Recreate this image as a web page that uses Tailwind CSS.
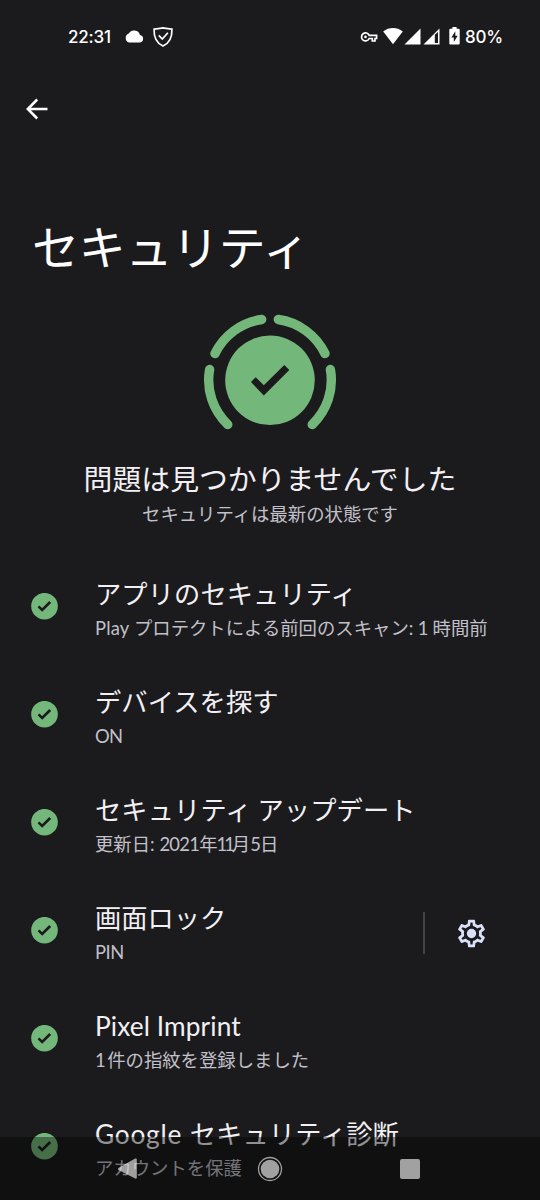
<!DOCTYPE html>
<html lang="ja">
<head>
<meta charset="utf-8">
<title>セキュリティ</title>
<script src="https://cdn.jsdelivr.net/npm/@tailwindcss/browser@4"></script>
</head>
<body class="bg-[#1b1b1d] font-['Noto_Sans_CJK_JP',sans-serif] text-[#f2f0f4]">
<svg class="hidden">
  <symbol id="ok" viewBox="0 0 27 27"><circle cx="13.5" cy="13.2" r="13.3" fill="#73b77b"/><path d="M7.5 13.3l3.7 3.7 8-8" fill="none" stroke="#1b1b1d" stroke-width="2.6"/></symbol>
</svg>
<div class="relative flex h-[1200px] w-[540px] flex-col overflow-hidden">
  <header class="flex h-[72px] items-center pl-[68px] pr-[37px] text-white">
    <span class="w-[44px] whitespace-nowrap pt-[2px] font-['Inter',sans-serif] text-[17px] font-medium leading-none tracking-[-0.2px]">22:31</span>
    <svg class="ml-[12px] h-[13px] w-[20px]" viewBox="0 0 18 12"><path fill="#fff" d="M14.5 4.6A5.6 5.6 0 0 0 4.2 3.3 4.3 4.3 0 0 0 4.5 11.5H14.5A3.5 3.5 0 0 0 14.5 4.6Z"/></svg>
    <svg class="ml-[8px] mt-px h-[22px] w-[22px]" viewBox="0 0 22 22" fill="none" stroke="#fff" stroke-width="1.7"><path d="M11 1.9C8 2.3 5 2.8 2.1 3.1 1.7 11 4 16.8 11 20 18 16.8 20.3 11 19.9 3.1 17 2.8 14 2.3 11 1.9Z"/><path d="M6.8 9.3l3.5 3.8 5.6-6.3"/></svg>
    <div class="ml-auto flex items-center">
      <svg class="mt-[2px] h-[12px] w-[18px]" viewBox="0 0 18 12" fill="none" stroke="#fff" stroke-width="1.7"><path d="M9.2 4.3H16.6V7.5H15V10H12.3V7.5H9.2A4 4 0 1 1 9.2 4.3Z"/><circle cx="5.5" cy="5.9" r="1.3" fill="#fff" stroke="none"/></svg>
      <svg class="ml-[5px] h-[18px] w-[20px]" viewBox="0 0 20 18" fill="#fff"><path d="M.2 4.5C6-.1 14-.1 19.8 4.5L10 17.2Z"/></svg>
      <svg class="ml-[1px] h-[17px] w-[17px]" viewBox="0 0 17 17" fill="#fff"><path d="M16.5.5V16.5H.5Z"/></svg>
      <svg class="ml-[2px] h-[17px] w-[17px]" viewBox="0 0 17 17" fill="#fff" fill-rule="evenodd"><path d="M16.5.5V16.5H.5ZM11.8 6.8V15H15V4Z"/></svg>
      <svg class="ml-[9px] h-[18px] w-[11px]" viewBox="0 0 11 18"><path fill="#fff" d="M3.4 0H7.6V1.8H9.6Q10.7 1.8 10.7 3V16.4Q10.7 17.5 9.6 17.5H1.4Q.3 17.5 .3 16.4V3Q.3 1.8 1.4 1.8H3.4Z"/><path fill="#1b1b1d" d="M6.3 4.3V8.7H8.7L4.8 15V10.6H2.4Z"/></svg>
      <span class="ml-[5px] w-[38px] whitespace-nowrap pt-[2px] font-['Inter',sans-serif] text-[17px] font-medium leading-none tracking-[-0.2px]">80%</span>
    </div>
  </header>

  <div class="flex h-[74px] items-center pl-[26px]">
    <svg class="h-[22px] w-[22px]" viewBox="0 0 22 22" fill="none" stroke="#fff" stroke-width="2.5"><path d="M21.5 11H2.4M11.2 1.5L1.8 11l9.4 9.5"/></svg>
  </div>

  <h1 class="mt-[64px] h-[74px] pl-[32px] text-[47px] leading-[70px] tracking-[-0.3px] text-white">セキュリティ</h1>

  <section class="flex h-[268px] flex-col items-center pt-[30px]">
    <svg class="h-[118px] w-[134px]" viewBox="203 314 134 118">
      <g fill="none" stroke="#73b77b" stroke-width="9.4" stroke-linecap="round">
        <path d="M278.3 319.5A61.3 61.3 0 0 1 325 353.6"/>
        <path d="M330.4 369.5A61.3 61.3 0 0 1 312.2 424.6"/>
        <path d="M261.7 319.5A61.3 61.3 0 0 0 215 353.6"/>
        <path d="M209.6 369.5A61.3 61.3 0 0 0 227.8 424.6"/>
      </g>
      <circle cx="270" cy="380.3" r="44.8" fill="#73b77b"/>
      <path fill="#1b1b1d" d="M251 382L255.7 377.3 263.8 385.3 284.3 365 289.3 370 263.8 395.5Z"/>
    </svg>
    <h2 class="mt-[25px] h-[43px] whitespace-nowrap text-[28.875px] leading-[42px]">問題は見つかりませんでした</h2>
    <p class="h-[27px] whitespace-nowrap text-[18.375px] leading-[27px] text-[#c2c0ca]">セキュリティは最新の状態です</p>
  </section>

  <main class="flex flex-col whitespace-nowrap">
    <div class="flex h-[108px] items-center pl-[31px]">
      <svg class="h-[27px] w-[27px]"><use href="#ok"/></svg>
      <div class="ml-[37px] flex flex-col pt-[3px]">
        <div class="h-[38px] text-[26.25px] leading-[36px] tracking-[0.1px]">アプリのセキュリティ</div>
        <div class="h-[28px] text-[18.375px] leading-[29px] text-[#c2c0ca]"><span class="font-['Lato'] leading-none tracking-[0.2px]">Play </span>プロテクトによる前回のスキャン<span class="font-['Lato'] leading-none tracking-[-0.2px]">: 1 </span>時間前</div>
      </div>
    </div>
    <div class="flex h-[108px] items-center pl-[31px]">
      <svg class="h-[27px] w-[27px]"><use href="#ok"/></svg>
      <div class="ml-[37px] flex flex-col pt-[3px]">
        <div class="h-[38px] text-[26.25px] leading-[36px] tracking-[0.1px]">デバイスを探す</div>
        <div class="h-[28px] text-[18.375px] leading-[29px] text-[#c2c0ca]"><span class="font-['Lato'] leading-none tracking-[-0.8px]">ON</span></div>
      </div>
    </div>
    <div class="flex h-[108px] items-center pl-[31px]">
      <svg class="h-[27px] w-[27px]"><use href="#ok"/></svg>
      <div class="ml-[37px] flex flex-col pt-[3px]">
        <div class="h-[38px] text-[26.25px] leading-[36px] tracking-[0.1px]">セキュリティ アップデート</div>
        <div class="h-[28px] text-[18.375px] leading-[29px] text-[#c2c0ca]">更新日<span class="font-['Lato'] leading-none">: </span><span class="font-['Lato'] leading-none tracking-[-0.7px]">2021</span>年<span class="-ml-px font-['Lato'] leading-none tracking-[-3px]">11</span>月<span class="font-['Lato'] leading-none tracking-[-0.9px]">5</span>日</div>
      </div>
    </div>
    <div class="flex h-[108px] items-center pl-[31px]">
      <svg class="h-[27px] w-[27px]"><use href="#ok"/></svg>
      <div class="ml-[37px] flex flex-col pt-[3px]">
        <div class="h-[38px] text-[26.25px] leading-[36px]">画面ロック</div>
        <div class="h-[28px] text-[18.375px] leading-[29px] text-[#c2c0ca]"><span class="font-['Lato'] leading-none tracking-[-0.5px]">PIN</span></div>
      </div>
      <div class="ml-auto mt-[6px] flex items-center pr-[52px]">
        <div class="h-[42px] w-[2px] bg-[#434346]"></div>
        <svg class="ml-[30px] h-[33px] w-[33px]" viewBox="0 0 24 24" fill="#dce1fb"><path d="M19.43 12.98c.04-.32.07-.64.07-.98 0-.34-.03-.66-.07-.98l2.11-1.65c.19-.15.24-.42.12-.64l-2-3.46c-.09-.16-.26-.25-.44-.25-.06 0-.12.01-.17.03l-2.49 1c-.52-.4-1.08-.73-1.69-.98l-.38-2.65C14.46 2.18 14.25 2 14 2h-4c-.25 0-.46.18-.49.42l-.38 2.65c-.61.25-1.17.59-1.69.98l-2.49-1c-.06-.02-.12-.03-.18-.03-.17 0-.34.09-.43.25l-2 3.46c-.13.22-.07.49.12.64l2.11 1.65c-.04.32-.07.65-.07.98 0 .33.03.66.07.98l-2.11 1.65c-.19.15-.24.42-.12.64l2 3.46c.09.16.26.25.44.25.06 0 .12-.01.17-.03l2.49-1c.52.4 1.08.73 1.69.98l.38 2.65c.03.24.24.42.49.42h4c.25 0 .46-.18.49-.42l.38-2.65c.61-.25 1.17-.59 1.69-.98l2.49 1c.06.02.12.03.18.03.17 0 .34-.09.43-.25l2-3.46c.12-.22.07-.49-.12-.64l-2.11-1.65zm-1.98-1.71c.04.31.05.52.05.73 0 .21-.02.43-.05.73l-.14 1.13.89.7 1.08.84-.7 1.21-1.27-.51-1.04-.42-.9.68c-.43.32-.84.56-1.25.73l-1.06.43-.16 1.13-.2 1.35h-1.4l-.19-1.35-.16-1.13-1.06-.43c-.43-.18-.83-.41-1.23-.71l-.91-.7-1.06.43-1.27.51-.7-1.21 1.08-.84.89-.7-.14-1.13c-.03-.31-.05-.54-.05-.74s.02-.43.05-.73l.14-1.13-.89-.7-1.08-.84.7-1.21 1.27.51 1.04.42.9-.68c.43-.32.84-.56 1.25-.73l1.06-.43.16-1.13.2-1.35h1.39l.19 1.35.16 1.13 1.06.43c.43.18.83.41 1.23.71l.91.7 1.06-.43 1.27-.51.7 1.21-1.07.85-.89.7.14 1.13z"/><circle cx="12" cy="12" r="3.4"/></svg>
      </div>
    </div>
    <div class="flex h-[108px] items-center pl-[31px]">
      <svg class="h-[27px] w-[27px]"><use href="#ok"/></svg>
      <div class="ml-[37px] flex flex-col pt-[3px]">
        <div class="h-[38px] text-[26.25px] leading-[37px]"><span class="font-['Lato'] leading-none tracking-[0.1px]">Pixel Imprint</span></div>
        <div class="h-[28px] text-[18.375px] leading-[29px] text-[#c2c0ca]"><span class="font-['Lato'] leading-none tracking-[-1.6px]">1 </span>件の指紋を登録しました</div>
      </div>
    </div>
    <div class="flex h-[108px] items-center pl-[31px]">
      <svg class="h-[27px] w-[27px]"><use href="#ok"/></svg>
      <div class="ml-[37px] flex flex-col pt-[3px]">
        <div class="h-[38px] text-[26.25px] leading-[36px] tracking-[0.1px]"><span class="font-['Lato'] leading-none tracking-[0.8px]">Google </span>セキュリティ診断</div>
        <div class="h-[28px] text-[18.375px] leading-[29px] text-[#c2c0ca]">アカウントを保護</div>
      </div>
    </div>
  </main>

  <nav class="absolute bottom-0 left-0 flex h-[63px] w-[540px] items-center bg-black/40 pl-[117px]">
    <svg class="h-[22px] w-[21px]" viewBox="0 0 21 22"><path d="M1.4 10L18.2.6Q19.8 0 19.8 1.6V19.6Q19.8 21.2 18.2 20.6L1.4 12Q.4 11 1.4 10Z" fill="#fff" fill-opacity=".6"/></svg>
    <svg class="ml-[119px] h-[26px] w-[26px]" viewBox="0 0 26 26"><circle cx="13" cy="13" r="9.3" fill="#a1a1a1"/><circle cx="13" cy="13" r="11.5" fill="none" stroke="#a1a1a1" stroke-width="1.3"/></svg>
    <div class="ml-[117px] h-[20px] w-[20px] rounded-[2px] bg-[#a1a1a1]"></div>
  </nav>
</div>
</body>
</html>
